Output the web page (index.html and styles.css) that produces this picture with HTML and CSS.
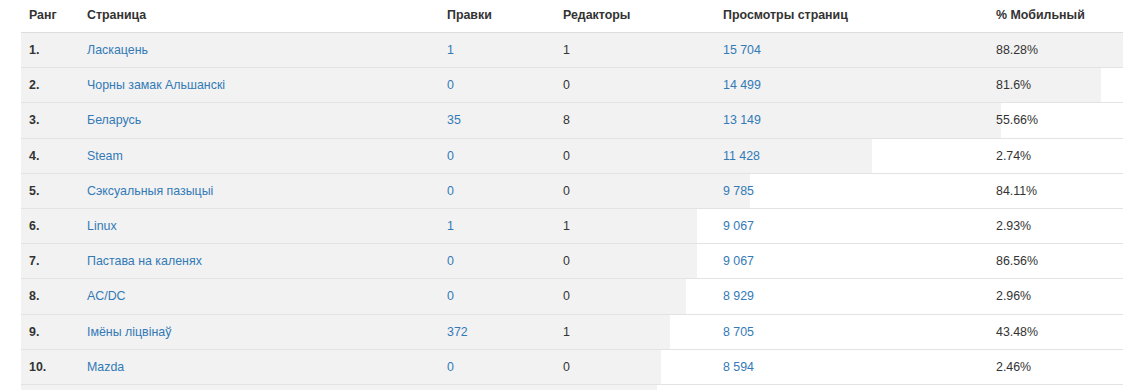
FILE: index.html
```html
<!DOCTYPE html>
<html lang="be">
<head>
<meta charset="utf-8">
<title>Топ старонак</title>
<link rel="stylesheet" href="styles.css">
</head>
<body>
<div class="wrap">
<table class="top">
  <colgroup>
    <col class="c-rank"><col class="c-page"><col class="c-edits"><col class="c-editors"><col class="c-views"><col class="c-mobile">
  </colgroup>
  <thead>
    <tr><th>Ранг</th><th>Страница</th><th>Правки</th><th>Редакторы</th><th>Просмотры страниц</th><th>% Мобильный</th></tr>
  </thead>
  <tbody>
    <tr style="--w:100%"><td class="rank">1.</td><td><a href="#">Ласкацень</a></td><td><a href="#">1</a></td><td>1</td><td><a href="#">15 704</a></td><td>88.28%</td></tr>
    <tr style="--w:92.33%"><td class="rank">2.</td><td><a href="#">Чорны замак Альшанскі</a></td><td><a href="#">0</a></td><td>0</td><td><a href="#">14 499</a></td><td>81.6%</td></tr>
    <tr style="--w:83.73%"><td class="rank">3.</td><td><a href="#">Беларусь</a></td><td><a href="#">35</a></td><td>8</td><td><a href="#">13 149</a></td><td>55.66%</td></tr>
    <tr style="--w:72.77%"><td class="rank">4.</td><td><a href="#">Steam</a></td><td><a href="#">0</a></td><td>0</td><td><a href="#">11 428</a></td><td>2.74%</td></tr>
    <tr style="--w:62.31%"><td class="rank">5.</td><td><a href="#">Сэксуальныя пазыцыі</a></td><td><a href="#">0</a></td><td>0</td><td><a href="#">9 785</a></td><td>84.11%</td></tr>
    <tr style="--w:57.74%"><td class="rank">6.</td><td><a href="#">Linux</a></td><td><a href="#">1</a></td><td>1</td><td><a href="#">9 067</a></td><td>2.93%</td></tr>
    <tr style="--w:57.74%"><td class="rank">7.</td><td><a href="#">Пастава на каленях</a></td><td><a href="#">0</a></td><td>0</td><td><a href="#">9 067</a></td><td>86.56%</td></tr>
    <tr style="--w:56.86%"><td class="rank">8.</td><td><a href="#">AC/DC</a></td><td><a href="#">0</a></td><td>0</td><td><a href="#">8 929</a></td><td>2.96%</td></tr>
    <tr style="--w:55.43%"><td class="rank">9.</td><td><a href="#">Імёны ліцвінаў</a></td><td><a href="#">372</a></td><td>1</td><td><a href="#">8 705</a></td><td>43.48%</td></tr>
    <tr style="--w:54.73%"><td class="rank">10.</td><td><a href="#">Mazda</a></td><td><a href="#">0</a></td><td>0</td><td><a href="#">8 594</a></td><td>2.46%</td></tr>
    <tr style="--w:54.4%"><td class="rank">&nbsp;</td><td>&nbsp;</td><td>&nbsp;</td><td>&nbsp;</td><td>&nbsp;</td><td>&nbsp;</td></tr>
  </tbody>
</table>
</div>
</body>
</html>
```
FILE: styles.css
```css
html, body {
  margin: 0;
  padding: 0;
  background: #fff;
}
body {
  font-family: "Liberation Sans", Arial, Helvetica, sans-serif;
  font-size: 12.4px;
  color: #333;
}
.wrap {
  width: 1123px;
  height: 390px;
  overflow: hidden;
  padding-left: 21px;
  box-sizing: border-box;
}
.top {
  width: 1170px;
  table-layout: fixed;
  border-collapse: collapse;
  border-spacing: 0;
}
.c-rank { width: 58px; }
.c-page { width: 360px; }
.c-edits { width: 116px; }
.c-editors { width: 160px; }
.c-views { width: 273px; }
.c-mobile { width: 203px; }
.top th {
  text-align: left;
  font-weight: bold;
  padding: 6px 8px 8px;
  line-height: 18px;
  border-bottom: 1px solid #ddd;
  white-space: nowrap;
}
.top td {
  padding: 8px 8px;
  line-height: 18.2px;
  border-top: 1px solid #e3e3e3;
  white-space: nowrap;
  text-align: left;
}
.top tbody tr {
  background: linear-gradient(to right, #f2f2f2 var(--w), #fff var(--w));
}
.top td.rank {
  font-weight: bold;
}
.top a {
  color: #337ab7;
  text-decoration: none;
}
```
